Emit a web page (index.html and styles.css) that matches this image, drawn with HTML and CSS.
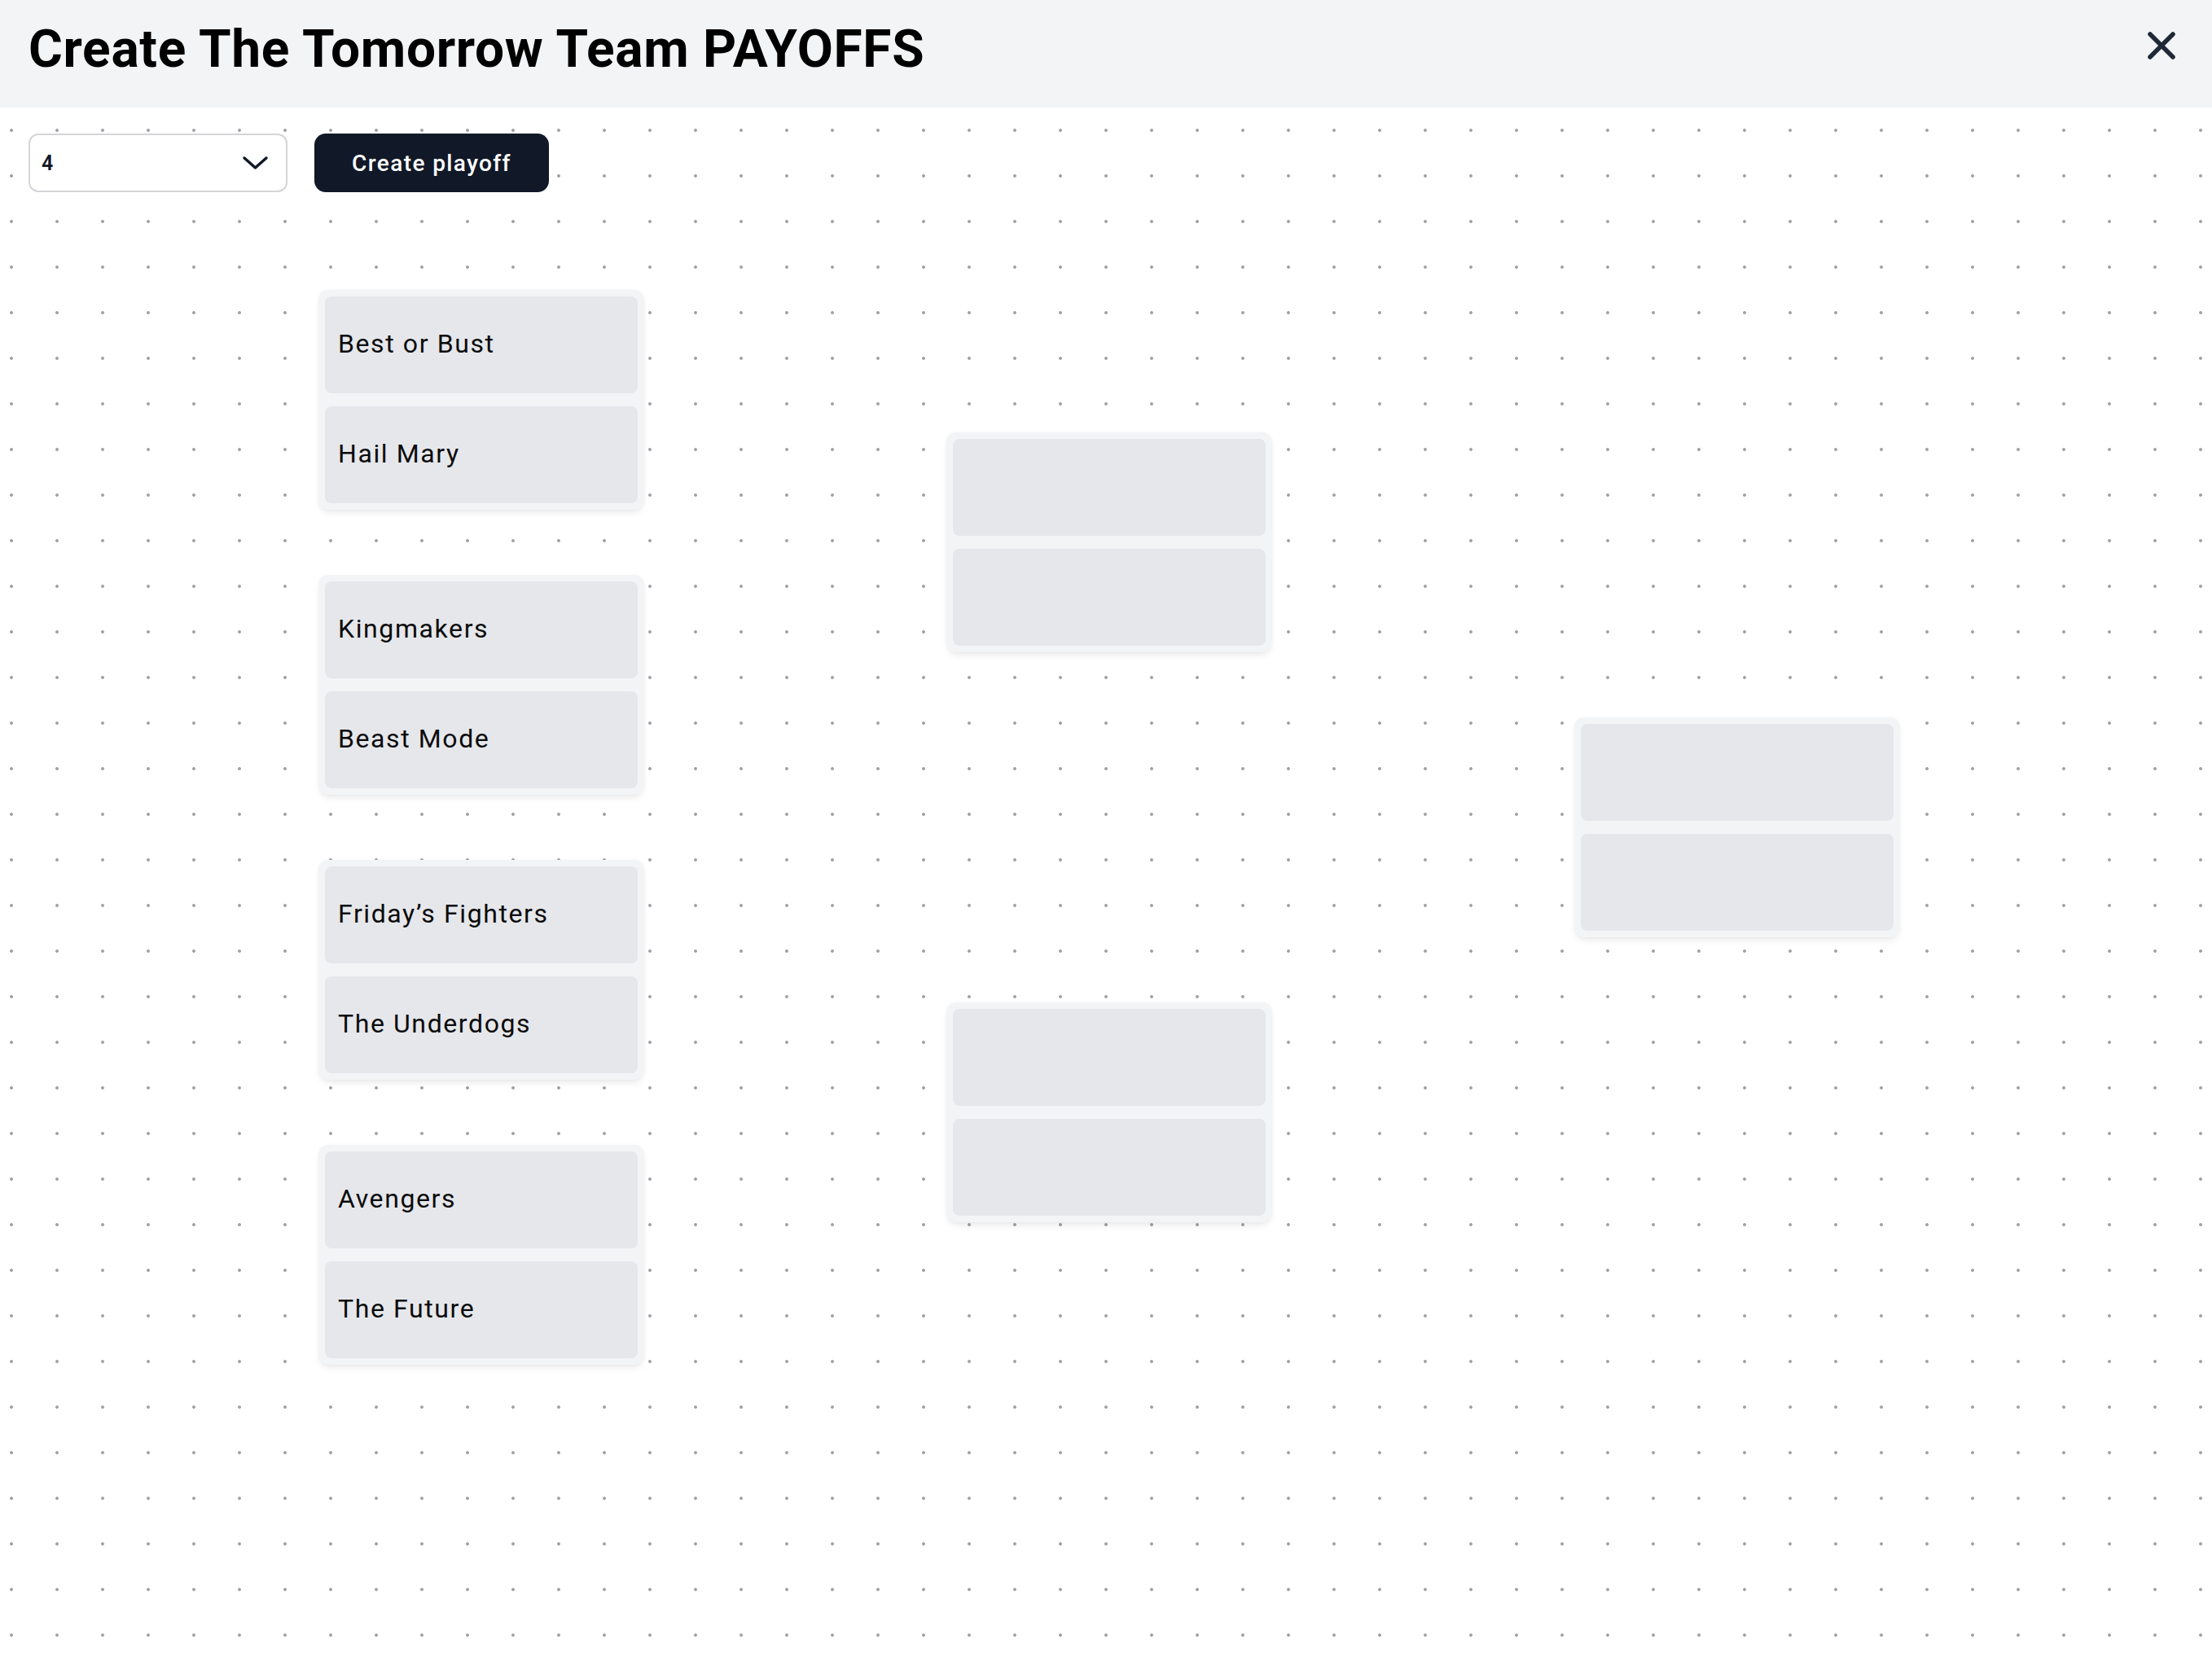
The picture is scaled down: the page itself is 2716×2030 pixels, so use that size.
FILE: index.html
```html
<!DOCTYPE html>
<html lang="en">
<head>
<meta charset="utf-8">
<title>Create The Tomorrow Team PAYOFFS</title>
<link rel="stylesheet" href="styles.css">
</head>
<body>
<header class="topbar">
  <h1 class="title">Create The Tomorrow Team PAYOFFS</h1>
  <button class="close" aria-label="Close">
    <svg width="40" height="40" viewBox="0 0 40 40"><path d="M6 6 L34 34 M34 6 L6 34" stroke="#1f2937" stroke-width="5.5" stroke-linecap="round" fill="none"/></svg>
  </button>
</header>
<div class="controls">
  <div class="select">
    <span class="select-value">4</span>
    <svg width="35" height="20" viewBox="0 0 35 20"><path d="M4 4 L17.5 16 L31 4" stroke="#111827" stroke-width="3.5" stroke-linecap="round" stroke-linejoin="round" fill="none"/></svg>
  </div>
  <button class="create">Create playoff</button>
</div>
<main class="bracket">
  <section class="round">
    <div class="match"><div class="slot">Best or Bust</div><div class="slot">Hail Mary</div></div>
    <div class="match"><div class="slot">Kingmakers</div><div class="slot">Beast Mode</div></div>
    <div class="match"><div class="slot">Friday’s Fighters</div><div class="slot">The Underdogs</div></div>
    <div class="match"><div class="slot">Avengers</div><div class="slot">The Future</div></div>
  </section>
  <section class="round">
    <div class="match"><div class="slot"></div><div class="slot"></div></div>
    <div class="match"><div class="slot"></div><div class="slot"></div></div>
  </section>
  <section class="round">
    <div class="match"><div class="slot"></div><div class="slot"></div></div>
  </section>
</main>
</body>
</html>
```
FILE: styles.css
```css
html, body {
  margin: 0;
  padding: 0;
}
body {
  font-family: Roboto, "Liberation Sans", Arial, sans-serif;
  color: #111;
  background-color: #fff;
  background-image: radial-gradient(circle at 14px 48px, #a1a1a6 0, #a1a1a6 1.5px, rgba(255,255,255,0) 2.3px);
  background-size: 56px 56px;
  min-height: 2030px;
}
.topbar {
  box-sizing: border-box;
  height: 132px;
  background: #f3f4f6;
  display: flex;
  justify-content: space-between;
  align-items: flex-start;
  padding: 29px 42px 0 35px;
}
.title {
  margin: 0;
  font-size: 64px;
  line-height: 64px;
  font-weight: 700;
  letter-spacing: 0.7px;
  color: #000;
}
.close {
  margin-top: 7px;
  padding: 0;
  border: 0;
  background: none;
  width: 40px;
  height: 40px;
  display: block;
}
.close svg { display: block; }
.controls {
  display: flex;
  gap: 33px;
  padding: 32px 0 0 35px;
}
.select {
  box-sizing: border-box;
  width: 318px;
  height: 72px;
  border: 2px solid #d4d5d8;
  border-radius: 12px;
  background: #fff;
  display: flex;
  align-items: center;
  justify-content: space-between;
  padding: 0 20px 0 14px;
}
.select-value {
  font-size: 25px;
  font-weight: 600;
  color: #111827;
}
.select svg { display: block; }
.create {
  box-sizing: border-box;
  width: 288px;
  height: 72px;
  border: 0;
  border-radius: 14px;
  background: #111827;
  color: #fff;
  font-family: Roboto, "Liberation Sans", Arial, sans-serif;
  font-size: 28px;
  font-weight: 500;
  letter-spacing: 1.4px;
  padding: 0;
}
.bracket {
  display: flex;
  gap: 371px;
  margin: 80px 0 0 391px;
  height: 1400px;
}
.round {
  width: 400px;
  display: flex;
  flex-direction: column;
  justify-content: space-around;
}
.match {
  box-sizing: border-box;
  height: 270px;
  padding: 8px;
  display: flex;
  flex-direction: column;
  gap: 16px;
  background: #f3f4f6;
  border-radius: 12px;
  box-shadow: 0 6px 10px -3px rgba(0,0,0,0.09), 0 0 5px rgba(0,0,0,0.035);
}
.slot {
  flex: 1;
  background: #e5e7eb;
  border-radius: 8px;
  display: flex;
  align-items: center;
  padding: 0 0 3px 16px;
  font-size: 32px;
  letter-spacing: 1.6px;
  color: #0b0b0b;
}
```
